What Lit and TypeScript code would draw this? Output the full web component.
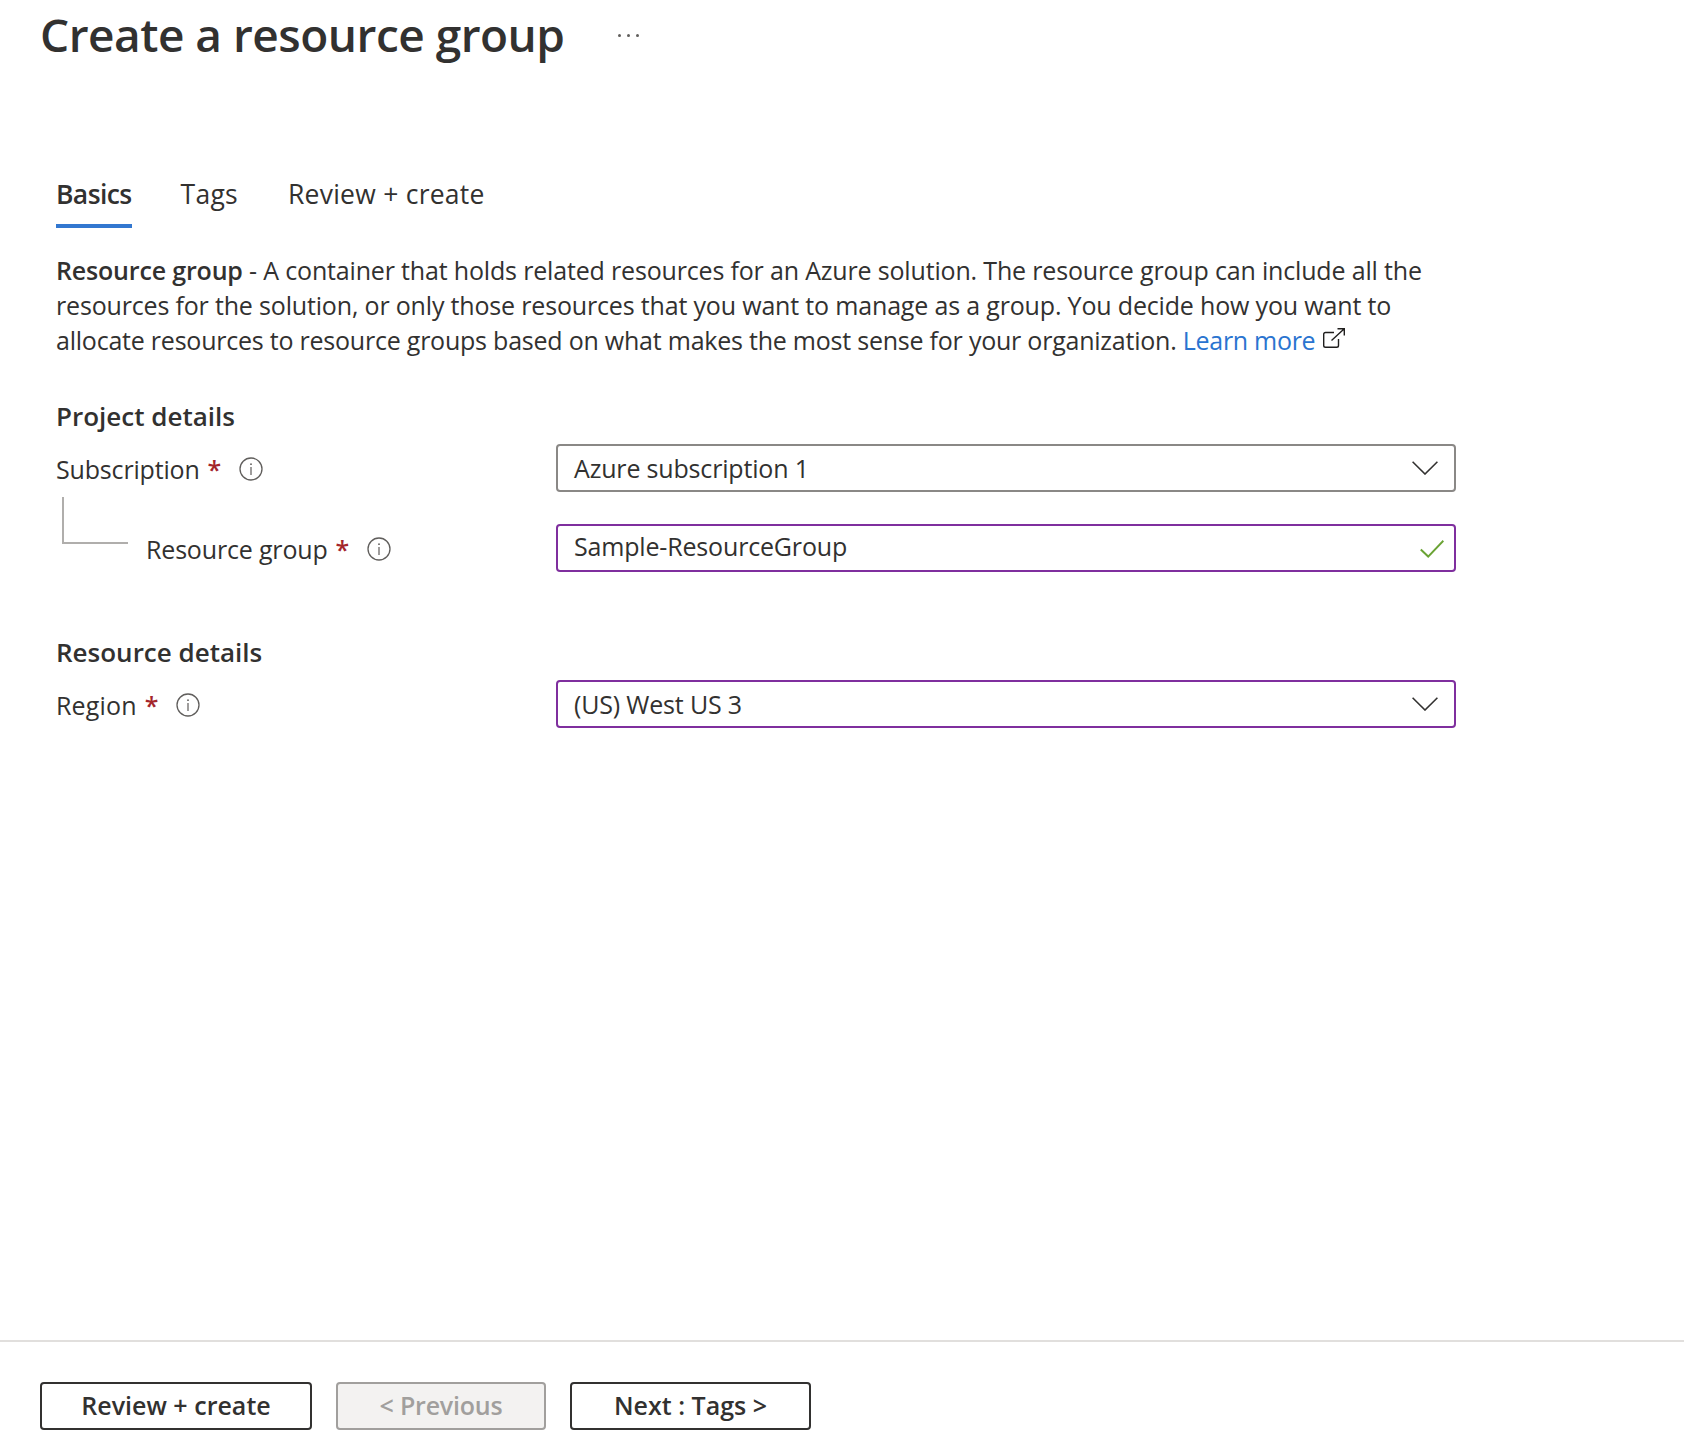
import { LitElement, html, css } from "lit";
import { customElement } from "lit/decorators.js";

const infoIcon = html`<svg class="info" viewBox="0 0 24 24" fill="none" aria-hidden="true">
  <circle cx="12" cy="12" r="11" stroke="#605e5c" stroke-width="1.3"/>
  <rect x="11.4" y="10" width="1.2" height="8" fill="#605e5c"/>
  <circle cx="12" cy="7.2" r="0.9" fill="#605e5c"/>
</svg>`;
const chevron = html`<svg class="chev" viewBox="0 0 26 14" fill="none" aria-hidden="true">
  <path d="M0.6 0.8 L13 13 L25.4 0.8" stroke="#323130" stroke-width="1.6"/>
</svg>`;
const check = html`<svg class="check" viewBox="0 0 24 18" fill="none" aria-hidden="true">
  <path d="M0.8 9.6 L8.2 16.6 L23.4 0.8" stroke="#6aa334" stroke-width="2"/>
</svg>`;
const external = html`<svg class="ext" viewBox="0 0 22 20" fill="none" aria-hidden="true">
  <path d="M11 4.5 H2.5 Q0.7 4.5 0.7 6.3 V17.5 Q0.7 19.3 2.5 19.3 H13.7 Q15.5 19.3 15.5 17.5 V11" stroke="#201f1e" stroke-width="1.4"/>
  <path d="M8.5 12.5 L21 1 M14.5 0.8 H21.3 V7.6" stroke="#201f1e" stroke-width="1.4"/>
</svg>`;

@customElement("app-root")
export class AppRoot extends LitElement {
  static styles = css`
    :host {
      display: flex;
      flex-direction: column;
      height: 1452px;
      background: #fff;
      color: #323130;
      font-family: "Open Sans", "Noto Sans", sans-serif;
      font-size: 25px;
      letter-spacing: -0.17px;
    }
    .main { flex: 1; padding: 0 0 0 56px; }
    .title-row { display: flex; align-items: center; height: 70px; margin-left: -16px; }
    h1 { margin: -2px 0 0; font-size: 46px; font-weight: 600; letter-spacing: -0.5px; color: #323130; white-space: nowrap; }
    .more { margin-left: 54px; display: flex; gap: 6px; }
    .more i { width: 3px; height: 3px; border-radius: 50%; background: #605e5c; }
    .tabs { display: flex; gap: 49px; margin-top: 96px; height: 62px; font-size: 26.5px; letter-spacing: 0.25px; }
    .tab { height: 62px; box-sizing: border-box; padding-top: 10px; line-height: 36px; white-space: nowrap; }
    .tab + .tab + .tab { margin-left: 1px; }
    .tab.active { font-weight: 600; letter-spacing: -0.6px; border-bottom: 4px solid #3277d0; }
    .desc { margin: 25px 0 0; line-height: 35px; white-space: nowrap; }
    .desc b { font-weight: 600; }
    .desc .tight { letter-spacing: -0.225px; }
    .desc a { color: #2a74d0; text-decoration: none; letter-spacing: -0.3px; }
    .ext { width: 22px; height: 20px; margin-left: 8px; vertical-align: 2px; }
    h2 { margin: 0; font-size: 26px; font-weight: 600; line-height: 36px; letter-spacing: 0; }
    .project { margin-top: 40px; }
    .resource { margin-top: 62px; }
    .row { display: grid; grid-template-columns: 500px 900px; align-items: center; margin-top: 10px; height: 48px; }
    .row + .row { margin-top: 32px; }
    .label { display: flex; align-items: center; white-space: nowrap; padding-top: 2px; }
    .label.wide { letter-spacing: 0.15px; }
    .req { color: #a4262c; margin-left: 8px; font-weight: 600; }
    .info { width: 24px; height: 24px; margin-left: 18px; flex: none; }
    .child { position: relative; padding-left: 90px; padding-top: 2px; }
    .elbow { position: absolute; left: 6px; bottom: 22px; width: 64px; height: 45px; border-left: 2px solid #b0aeac; border-bottom: 2px solid #b0aeac; }
    .field {
      box-sizing: border-box; height: 48px; display: flex; align-items: center; justify-content: space-between;
      border: 2px solid #8a8886; border-radius: 4px; padding: 0 16px 0 16px;
    }
    .field.focus { border-color: #7f2f9e; }
    .field.valid { padding-right: 10px; padding-bottom: 4px; }
    .chev { width: 26px; height: 14px; flex: none; }
    .check { width: 24px; height: 18px; flex: none; margin-top: 5px; }
    .footer { border-top: 2px solid #e1dfdd; height: 112px; box-sizing: border-box; padding: 40px 0 0 40px; display: flex; gap: 24px; align-items: flex-start; }
    .btn {
      box-sizing: border-box; height: 48px; display: flex; align-items: center; justify-content: center; padding-bottom: 3px;
      border: 2px solid #323130; border-radius: 4px; font-weight: 600; white-space: nowrap; background: #fff; color: #323130; letter-spacing: 0.02px;
    }
    .btn.review { width: 272px; }
    .btn.prev { width: 210px; background: #f3f2f1; border-color: #a19f9d; color: #a19f9d; letter-spacing: -0.2px; }
    .btn.next { width: 241px; }
  `;

  render() {
    return html`
      <div class="main">
        <div class="title-row">
          <h1>Create a resource group</h1>
          <div class="more"><i></i><i></i><i></i></div>
        </div>
        <div class="tabs">
          <div class="tab active">Basics</div>
          <div class="tab">Tags</div>
          <div class="tab">Review + create</div>
        </div>
        <p class="desc"><b>Resource group</b> - A container that holds related resources for an Azure solution. The resource group can include all the<br>resources for the solution, or only those resources that you want to manage as a group. You decide how you want to<br><span class="tight">allocate resources to resource groups based on what makes the most sense for your organization. </span><a href="#">Learn more</a>${external}</p>

        <section class="project">
          <h2>Project details</h2>
          <div class="row">
            <div class="label">Subscription<span class="req">*</span>${infoIcon}</div>
            <div class="field"><span>Azure subscription 1</span>${chevron}</div>
          </div>
          <div class="row">
            <div class="label child"><span class="elbow"></span>Resource group<span class="req">*</span>${infoIcon}</div>
            <div class="field focus valid"><span>Sample-ResourceGroup</span>${check}</div>
          </div>
        </section>

        <section class="resource">
          <h2>Resource details</h2>
          <div class="row">
            <div class="label wide">Region<span class="req">*</span>${infoIcon}</div>
            <div class="field focus"><span>(US) West US 3</span>${chevron}</div>
          </div>
        </section>
      </div>
      <div class="footer">
        <div class="btn review">Review + create</div>
        <div class="btn prev">&lt; Previous</div>
        <div class="btn next">Next : Tags &gt;</div>
      </div>
    `;
  }
}
